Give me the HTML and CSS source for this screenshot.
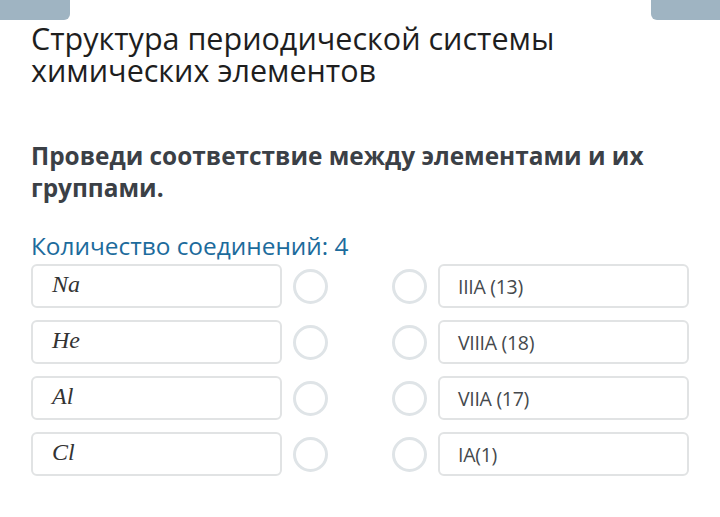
FILE: index.html
```html
<!DOCTYPE html>
<html lang="ru">
<head>
<meta charset="utf-8">
<link rel="stylesheet" href="styles.css">
</head>
<body>
<div class="tabs">
  <div class="tab tab-left"></div>
  <div class="tab tab-right"></div>
</div>
<main class="content">
  <h1 class="title">Структура периодической системы химических элементов</h1>
  <p class="question">Проведи соответствие между элементами и их группами.</p>
  <p class="count">Количество соединений: 4</p>
  <div class="match">
    <div class="row">
      <div class="box left"><span class="math">Na</span></div>
      <span class="dot"></span><span class="gap"></span><span class="dot"></span>
      <div class="box right">IIIA (13)</div>
    </div>
    <div class="row">
      <div class="box left"><span class="math">He</span></div>
      <span class="dot"></span><span class="gap"></span><span class="dot"></span>
      <div class="box right">VIIIA (18)</div>
    </div>
    <div class="row">
      <div class="box left"><span class="math">Al</span></div>
      <span class="dot"></span><span class="gap"></span><span class="dot"></span>
      <div class="box right">VIIA (17)</div>
    </div>
    <div class="row">
      <div class="box left"><span class="math">Cl</span></div>
      <span class="dot"></span><span class="gap"></span><span class="dot"></span>
      <div class="box right">IA(1)</div>
    </div>
  </div>
</main>
</body>
</html>
```
FILE: styles.css
```css
html, body {
  margin: 0;
  padding: 0;
  background: #ffffff;
}
body {
  width: 720px;
  height: 517px;
  overflow: hidden;
  font-family: "Open Sans", "Noto Sans", sans-serif;
  color: #222;
}
.tabs {
  display: flex;
  justify-content: space-between;
  height: 20px;
}
.tab {
  width: 70px;
  height: 20px;
  background: #9fb4c2;
}
.tab-left { border-bottom-right-radius: 6px; }
.tab-right { width: 69px; border-bottom-left-radius: 6px; }
.content {
  padding: 0 0 0 31px;
}
.title {
  margin: 2px 0 0 0;
  font-weight: 400;
  font-size: 30.5px;
  line-height: 32px;
  color: #1e1e1e;
  width: 600px;
  letter-spacing: 0;
}
.question {
  margin: 54px 0 0 0;
  font-weight: 700;
  font-size: 24.4px;
  line-height: 32px;
  color: #3b4046;
  width: 650px;
}
.count {
  margin: 27px 0 0 0;
  font-size: 24.4px;
  line-height: 30px;
  color: #1c6b9c;
}
.match {
  margin-top: 3px;
  display: flex;
  flex-direction: column;
  gap: 12px;
}
.row {
  display: flex;
  align-items: center;
  height: 44px;
}
.box {
  box-sizing: border-box;
  width: 251px;
  height: 44px;
  border: 2px solid #e1e3e4;
  border-radius: 6px;
  display: flex;
  align-items: center;
}
.left { padding-left: 19px; }
.right {
  padding-left: 18px;
  font-size: 19.5px;
  color: #45494d;
  letter-spacing: -0.3px;
}
.math {
  font-family: "Liberation Serif", "DejaVu Serif", serif;
  font-style: italic;
  font-size: 24px;
  color: #333;
  position: relative;
  top: -2px;
}
.dot {
  box-sizing: border-box;
  width: 35px;
  height: 35px;
  border: 3px solid #dfe4e7;
  border-radius: 50%;
  margin-left: 11px;
}
.gap { width: 54px; }
.row .dot + .gap + .dot { margin-left: 10px; margin-right: 11px; }
```
